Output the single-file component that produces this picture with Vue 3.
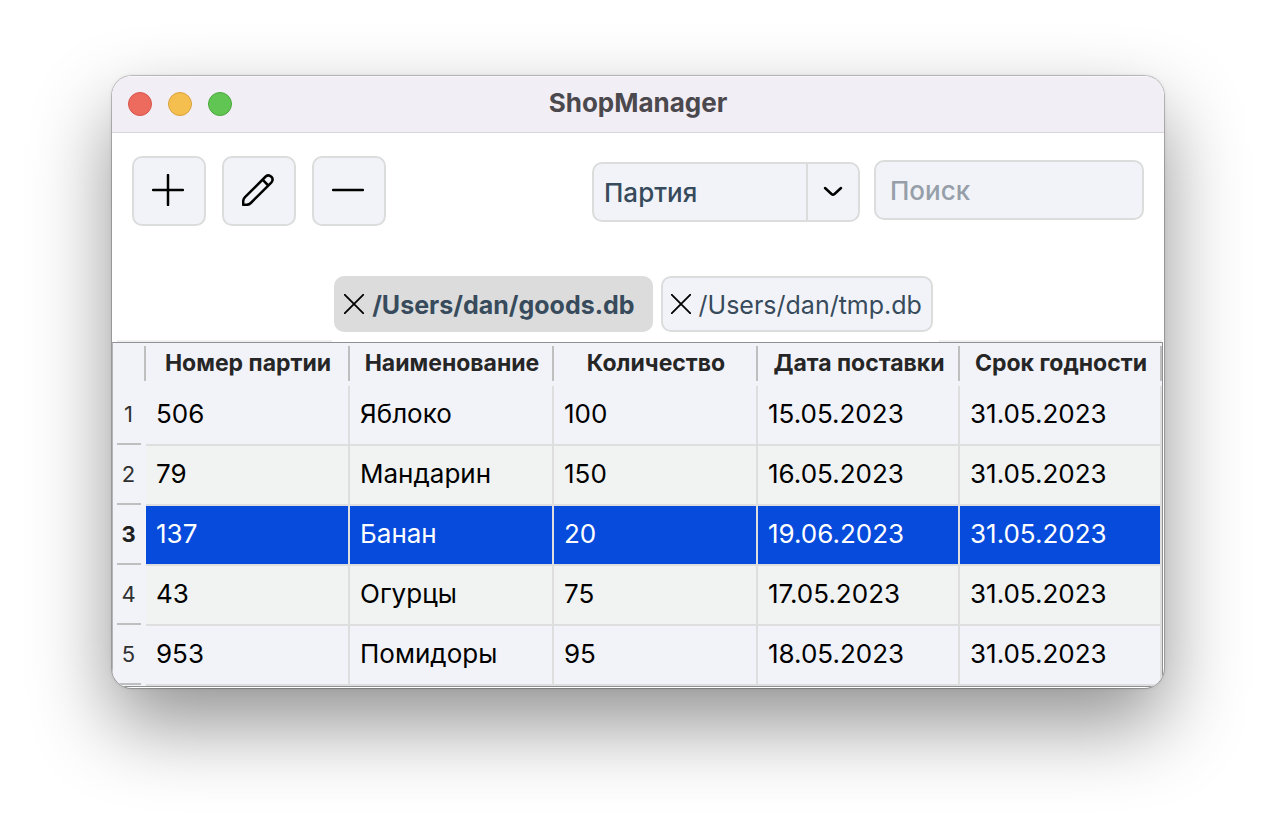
<script setup>
import { ref } from 'vue'

const field = ref('Партия')
const query = ref('')
const activeTab = ref(0)
const selectedRow = ref(2)

const tabs = ['/Users/dan/goods.db', '/Users/dan/tmp.db']
const columns = ['Номер партии', 'Наименование', 'Количество', 'Дата поставки', 'Срок годности']
const rows = [
  ['506', 'Яблоко', '100', '15.05.2023', '31.05.2023'],
  ['79', 'Мандарин', '150', '16.05.2023', '31.05.2023'],
  ['137', 'Банан', '20', '19.06.2023', '31.05.2023'],
  ['43', 'Огурцы', '75', '17.05.2023', '31.05.2023'],
  ['953', 'Помидоры', '95', '18.05.2023', '31.05.2023'],
]
</script>

<template>
  <div class="desktop">
    <main class="window">
      <header class="titlebar">
        <div class="lights">
          <button class="light red" type="button" aria-label="Закрыть"></button>
          <button class="light yellow" type="button" aria-label="Свернуть"></button>
          <button class="light green" type="button" aria-label="Развернуть"></button>
        </div>
        <h1 class="title">ShopManager</h1>
      </header>

      <div class="toolbar">
        <div class="actions">
          <button class="tool" type="button" aria-label="Добавить">
            <svg width="32" height="32" viewBox="0 0 32 32"><path d="M16 1v30M1 16h30" /></svg>
          </button>
          <button class="tool" type="button" aria-label="Изменить">
            <svg width="32" height="32" viewBox="0 0 32 32">
              <path d="M1.200 30.800v-3.500Q1.200 25 3 23.200L23.700 2.500Q26.500 .2 29.300 2.700Q31.800 5.500 29.500 8.300L8.800 29Q7 30.800 4.700 30.800ZM20.500 5.700l5.800 5.800" />
            </svg>
          </button>
          <button class="tool" type="button" aria-label="Удалить">
            <svg width="32" height="32" viewBox="0 0 32 32"><path d="M1 16h30" /></svg>
          </button>
        </div>
        <div class="filters">
          <div class="combo">
            <select v-model="field" aria-label="Поле поиска">
              <option>Партия</option>
            </select>
            <span class="arrow">
              <svg width="20" height="12" viewBox="0 0 20 12"><path d="M2 2l6.500 6q1.500 1.200 3 0L18 2" /></svg>
            </span>
          </div>
          <input v-model="query" class="search" type="text" placeholder="Поиск" aria-label="Поиск" />
        </div>
      </div>

      <div class="tabbar">
        <nav class="tabs">
          <div v-for="(tab, i) in tabs" :key="tab" class="tab" :class="{ active: i === activeTab }">
            <button class="close" type="button" :aria-label="'Закрыть ' + tab">
              <svg width="20" height="20" viewBox="0 0 20 20"><path d="M0 0l20 20M20 0L0 20" /></svg>
            </button>
            <button class="name" type="button" @click="activeTab = i">{{ tab }}</button>
          </div>
        </nav>
      </div>

      <div class="grid">
        <table>
          <colgroup>
            <col class="c-num" />
            <col class="c-wide" />
            <col class="c-wide" />
            <col class="c-wide" />
            <col class="c-date" />
            <col class="c-date" />
          </colgroup>
          <thead>
            <tr>
              <td class="head"></td>
              <th v-for="c in columns" :key="c" class="head" scope="col">{{ c }}</th>
            </tr>
          </thead>
          <tbody>
            <tr v-for="(row, i) in rows" :key="i" :class="{ selected: i === selectedRow }" @click="selectedRow = i">
              <th class="num" scope="row">{{ i + 1 }}</th>
              <td v-for="(cell, j) in row" :key="j" class="cell">{{ cell }}</td>
            </tr>
          </tbody>
        </table>
      </div>
    </main>
  </div>
</template>

<style>
body {
  margin: 0;
  background: #fff;
}
</style>

<style scoped>
* {
  box-sizing: border-box;
}
.desktop {
  min-height: 100vh;
  padding: 76px 112px;
  overflow: hidden;
  background: #fff;
  font-family: Inter, "Liberation Sans", sans-serif;
  font-size: 26px;
  color: #000;
}
button,
input,
select {
  margin: 0;
  padding: 0;
  border: 0;
  background: none;
  font: inherit;
  color: inherit;
}
svg {
  display: block;
  fill: none;
  stroke: #000;
  stroke-width: 2.5;
  stroke-linecap: round;
  stroke-linejoin: round;
}
.window {
  overflow: hidden;
  background: #fff;
  border-radius: 20px;
  box-shadow: 0 0 0 1px rgba(0, 0, 0, 0.2), 0 0 4px rgba(0, 0, 0, 0.12), 0 36px 80px rgba(0, 0, 0, 0.43);
}
.titlebar {
  display: grid;
  grid-template-columns: 1fr auto 1fr;
  align-items: center;
  height: 57px;
  padding: 0 16px;
  background: #f2eef6;
  border-bottom: 1px solid #d8d6da;
  box-shadow: inset 0 1px #faf8fb;
}
.lights {
  display: flex;
  gap: 16px;
}
.light {
  width: 24px;
  height: 24px;
  border-radius: 50%;
}
.red {
  background: #ed6a5e;
  border: 1px solid #d65449;
}
.yellow {
  background: #f5bf4f;
  border: 1px solid #d9a23e;
}
.green {
  background: #61c554;
  border: 1px solid #4ca73e;
}
.title {
  margin: 0;
  padding-bottom: 2px;
  font-size: 26px;
  line-height: 32px;
  font-weight: 700;
  color: #4b494d;
}
.toolbar {
  display: flex;
  justify-content: space-between;
  padding: 23px 20px 0;
}
.actions {
  display: flex;
  gap: 16px;
}
.tool {
  display: grid;
  place-items: center;
  width: 74px;
  height: 70px;
  padding: 0 2px 2px 0;
  border: 2px solid #dbdcdc;
  border-radius: 10px;
  background: #f2f3f8;
}
.filters {
  display: flex;
  gap: 14px;
  padding-top: 4px;
}
.combo {
  display: grid;
  grid-template-columns: 1fr 52px;
  width: 268px;
  height: 60px;
  margin-top: 2px;
  border: 2px solid #dbdcdc;
  border-radius: 10px;
  background: #f2f3f8;
}
.combo select {
  grid-area: 1 / 1 / 2 / 3;
  width: 100%;
  padding-left: 10px;
  appearance: none;
  font-weight: 500;
  color: #374b5c;
}
.arrow {
  grid-area: 1 / 2;
  display: grid;
  place-items: center;
  border-left: 2px solid #dbdcdc;
  pointer-events: none;
}
.search {
  width: 270px;
  height: 60px;
  padding: 0 14px;
  border: 2px solid #dbdcdc;
  border-radius: 10px;
  background: #f2f3f8;
  font-weight: 500;
}
.search::placeholder {
  color: #969fa9;
  opacity: 1;
}
.tabbar {
  display: flex;
  align-items: flex-end;
  padding: 50px 2px 0 5px;
}
.tabbar::before,
.tabbar::after {
  content: "";
  flex: 1 1 0;
  height: 2px;
  background: #f0f0f0;
}
.tabbar::after {
  flex-basis: 8px;
}
.tabs {
  display: flex;
  gap: 8px;
  padding: 0 6px 10px 2px;
}
.tab {
  display: flex;
  align-items: center;
  gap: 8px;
  height: 56px;
  padding: 0 9px 0 8px;
  border: 2px solid #dbdcdc;
  border-radius: 10px;
  background: #f2f3f8;
  font-size: 25px;
  color: #374b5c;
}
.tab.active {
  padding-right: 16px;
  background: #dcdcdc;
  border-color: #dcdcdc;
  font-weight: 700;
}
.close svg {
  stroke-width: 1.8;
}
.name {
  padding-top: 2px;
}
.grid {
  margin-right: 1px;
  margin-bottom: 1px;
  border: 1px solid #8f9092;
  border-left-color: #b4b4b6;
  background: #f2f3f8;
}
table {
  width: 100%;
  table-layout: fixed;
  border-collapse: separate;
  border-spacing: 0;
}
.c-num {
  width: 33px;
}
.c-wide {
  width: 204px;
}
.c-date {
  width: 202px;
}
.head {
  height: 43px;
  padding: 0;
  background: linear-gradient(#bfbfbf, #bfbfbf) right 3px / 2px 35px no-repeat;
  font-size: 23px;
  line-height: 40px;
  font-weight: 700;
  color: #262626;
  white-space: nowrap;
  vertical-align: top;
}
thead td.head {
  background-position: 31px 3px;
}
.num {
  height: 60px;
  padding: 0 2px 4px 0;
  background: linear-gradient(#bfbfbf, #bfbfbf) 4px 57px / 24px 2px no-repeat;
  font-size: 22px;
  font-weight: 400;
  color: #303030;
  text-align: center;
}
.selected .num {
  font-weight: 700;
  color: #202020;
}
.cell {
  height: 60px;
  padding: 0 10px 4px;
  border-right: 2px solid #dedede;
  border-bottom: 2px solid #dedede;
  white-space: nowrap;
}
tr:nth-child(even) .cell {
  background: #f0f3f2;
}
.selected .cell {
  background: #064bdb;
  color: #fff;
}
</style>
